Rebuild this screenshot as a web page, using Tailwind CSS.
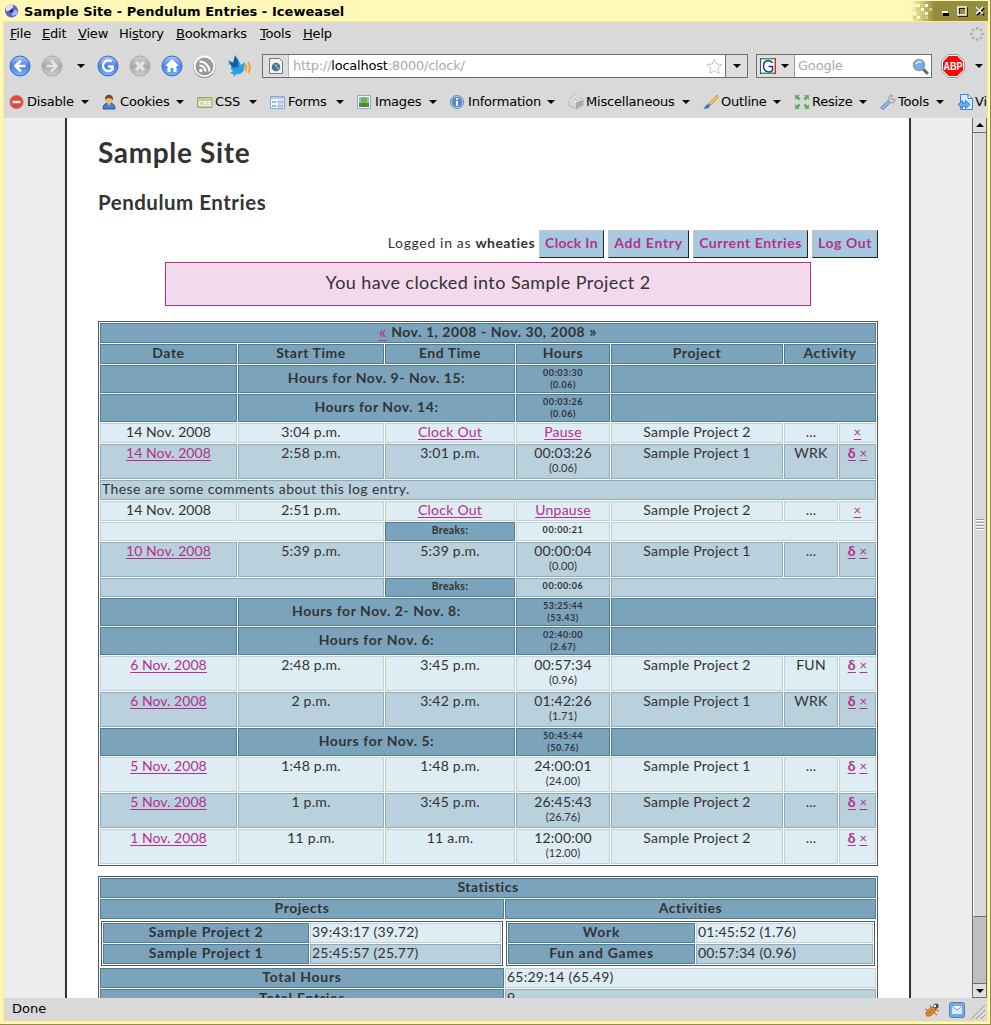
<!DOCTYPE html>
<html lang="en">
<head>
<meta charset="utf-8">
<title>Sample Site - Pendulum Entries - Iceweasel</title>
<script src="https://cdn.jsdelivr.net/npm/@tailwindcss/browser@4"></script>
</head>
<body class="w-[991px] h-[1025px] overflow-hidden bg-[#fff8b8] font-['DejaVu_Sans',sans-serif] text-[13px] text-black">
<svg class="absolute size-0">
  <defs>
    <linearGradient id="blue" x2="0" y2="1"><stop stop-color="#a9c8ff"/><stop offset=".5" stop-color="#4a80ea"/><stop offset="1" stop-color="#78b4ff"/></linearGradient>
    <linearGradient id="gray" x2="0" y2="1"><stop stop-color="#d0d0d0"/><stop offset=".5" stop-color="#a9a9a9"/><stop offset="1" stop-color="#cfcfcf"/></linearGradient>
    <symbol id="caret" viewBox="0 0 8 4"><path d="M0 0h8L4 4z"/></symbol>
  </defs>
</svg>
<div class="flex flex-col w-[991px] h-[1025px] border-r border-b border-[#968d3c] pt-px pl-[3px] pr-[2px] pb-[2px]">
  <!-- title bar -->
  <header class="flex h-5 shrink-0 items-center">
    <svg class="ml-[1px] size-4" viewBox="0 0 16 16"><circle cx="7.500" cy="8" r="6.500" fill="#5a66c8"/><path d="M2 5C4 1 8 1 9 3S6 7 4 8 2 7 2 5z" fill="#dce4ff"/><path d="M9 7c3-1 5 1 4 3s-4 4-5 2 0-4 1-5z" fill="#a8b4f4"/><path d="M5 10l3-5 2 4z" fill="#2a2d83"/></svg>
    <span class="ml-[4px] pt-px font-bold text-[13px] tracking-[0.05px] whitespace-nowrap">Sample Site - Pendulum Entries - Iceweasel</span>
    <svg class="ml-auto h-5 w-[77px]" viewBox="0 0 77 20">
      <defs><linearGradient id="tb"><stop stop-color="#fff8b8"/><stop offset=".3" stop-color="#968d3c"/></linearGradient></defs>
      <rect width="77" height="20" fill="url(#tb)"/>
      <path d="M2 3h3v3H2zM6 3h3v3H6zM2 11h3v3H2zM10 7h3v3h-3zM6 15h3v3H6zM14 3h3v3h-3zM14 11h3v3h-3z" fill="#fffbd8"/><path d="M6 7h3v3H6zM10 11h3v3h-3zM18 7h3v3h-3zM2 15h3v3H2zM14 15h3v3h-3zM10 3h3v3h-3z" fill="#d9cf75"/>
      <path d="M32 12h6v3h-6z"/><path d="M31 10h6v2h-6z" fill="#fff"/>
      <path d="M48 7h8v8h-8z" fill="none" stroke="#000" stroke-width="1.500"/><path d="M47 6h8v8h-8z" fill="none" stroke="#fff" stroke-width="1.500"/>
      <path d="M66 7l7 7m0-7l-7 7" stroke="#000" stroke-width="2"/><path d="M65 6l7 7m0-7l-7 7" stroke="#fff" stroke-width="1.600"/>
    </svg>
  </header>
  <div class="flex h-[1001px] flex-col border border-[#ffec80] bg-[#d9d9d9] overflow-hidden">
    <!-- menu bar -->
    <nav class="flex h-6 shrink-0 items-center pl-[6px] text-[13px] tracking-[-0.2px]">
      <span class="w-8"><u>F</u>ile</span><span class="w-9"><u>E</u>dit</span><span class="w-[41px]"><u>V</u>iew</span><span class="w-[57px]">Hi<u>s</u>tory</span><span class="w-[84px]"><u>B</u>ookmarks</span><span class="w-[43px]"><u>T</u>ools</span><span><u>H</u>elp</span>
      <svg class="ml-auto mr-[3px] size-[14px]" viewBox="0 0 14 14" fill="#aaa"><circle cx="7" cy="1.500" r="1.300"/><circle cx="11" cy="3" r="1.300"/><circle cx="12.500" cy="7" r="1.300"/><circle cx="11" cy="11" r="1.300"/><circle cx="7" cy="12.500" r="1.300"/><circle cx="3" cy="11" r="1.300"/><circle cx="1.500" cy="7" r="1.300"/><circle cx="3" cy="3" r="1.300"/></svg>
    </nav>
    <!-- navigation bar -->
    <div class="flex h-10 shrink-0 items-center pl-[5px]">
      <svg class="size-[22px]" viewBox="0 0 22 22"><circle cx="11" cy="11" r="10" fill="url(#blue)" stroke="#3767c5"/><path d="M12 5.500L6.500 11l5.500 5.500M7 11h9.500" fill="none" stroke="#fff" stroke-width="2.600"/></svg>
      <svg class="ml-[10px] size-[22px]" viewBox="0 0 22 22"><circle cx="11" cy="11" r="10" fill="url(#gray)" stroke="#aaa"/><path d="M10 5.500l5.500 5.500-5.500 5.500M15 11H5.500" fill="none" stroke="#e4e4e4" stroke-width="2.600"/></svg>
      <svg class="ml-[14px] h-1 w-2"><use href="#caret"/></svg>
      <svg class="ml-[12px] size-[22px]" viewBox="0 0 22 22"><circle cx="11" cy="11" r="10" fill="url(#blue)" stroke="#3767c5"/><path d="M14.500 6.500A5.300 5.300 0 1 0 15.500 14v-2.500H11" fill="none" stroke="#fff" stroke-width="2.500"/></svg>
      <svg class="ml-[10px] size-[22px]" viewBox="0 0 22 22"><circle cx="11" cy="11" r="10" fill="url(#gray)" stroke="#aaa"/><path d="M7 7l8 8m0-8l-8 8" stroke="#e4e4e4" stroke-width="3.200"/></svg>
      <svg class="ml-[10px] size-[22px]" viewBox="0 0 22 22"><circle cx="11" cy="11" r="10" fill="url(#blue)" stroke="#3767c5"/><path d="M11 4l7 7h-2.500v6h-3v-4h-3v4h-3v-6H4z" fill="#fff"/></svg>
      <svg class="ml-[10px] size-[23px]" viewBox="0 0 23 23"><circle cx="11.500" cy="12" r="11" fill="#888"/><circle cx="11.500" cy="11.200" r="10.700" fill="#fff"/><circle cx="11.500" cy="11.500" r="9" fill="#9a9a9a"/><circle cx="8" cy="15.500" r="1.700" fill="#fff"/><path d="M6.500 10.500a6 6 0 0 1 6 6M6.500 6.500a10 10 0 0 1 10 10" fill="none" stroke="#fff" stroke-width="2"/></svg>
      <svg class="ml-[10px] h-[22px] w-[26px]" viewBox="0 0 26 22"><path d="M8 7l2-5 2 2 3 6 4-3-1 7c-1 4-4 6-8 5l-2 3-1-3-3-1 3-2c-3-2-2-4-1-6L1 9z" fill="#2a9fe4"/><path d="M9 0l3 6v7L7 8zM2 5l7 4 1 4-4-1z" fill="#125f9f"/><path d="M19 9c1.500 2 1.500 5 0 7M22 7c2.500 3 2.500 8 0 11" fill="none" stroke="#ff9d21" stroke-width="1.900"/></svg>
      <div class="ml-[10px] flex h-6 w-[486px] items-stretch border border-[#6d6d6d] bg-white">
        <div class="flex w-[26px] items-center justify-center border-r border-[#b5b5b5] bg-[#dedede]">
          <svg class="h-4 w-[14px]" viewBox="0 0 14 16"><path d="M.5.5h10l3 3v12H.500z" fill="#f4f4f0" stroke="#777"/><circle cx="7" cy="9" r="4.300" fill="#416eb2"/><path d="M5 6l4 1-2 3zM8 9l3 1-3 2z" fill="#93be48"/></svg>
        </div>
        <div class="flex flex-1 items-center pl-[4px] text-[13px] tracking-[-0.22px] text-[#aaa]"><span>http://<span class="text-black">localhost</span>:8000/clock/</span></div>
        <svg class="my-auto mr-[2px] size-[17px]" viewBox="0 0 17 17"><path d="M8.500 1l2.200 5 5.300.5-4 3.600 1.200 5.400-4.700-2.800-4.700 2.800L5 10.100 1 6.500 6.300 6z" fill="#fff" stroke="#c4c4c4"/></svg>
        <div class="flex w-[22px] items-center justify-center border-l border-[#6d6d6d] bg-[#dedede]"><svg class="h-1 w-2"><use href="#caret"/></svg></div>
      </div>
      <div class="ml-2 flex h-6 w-[176px] items-stretch border border-[#6d6d6d] bg-white">
        <div class="flex w-[38px] items-center border-r border-[#999] bg-[#dedede] pl-[3px]">
          <svg class="size-4" viewBox="0 0 16 16"><rect width="16" height="16" fill="#fff"/><path d="M0 .7h16M0 15.300h16" stroke="#35a935" stroke-width="1.400"/><path d="M.5 0v16" stroke="#2345c0"/><path d="M15.300 0v16" stroke="#d22" stroke-width="1.400"/><path d="M12.500 5C11 1.800 3.500 1.500 3.500 8s7 7 9 4.500V8.500H8.500" fill="none" stroke="#14329b" stroke-width="1.500"/></svg>
          <svg class="ml-[5px] h-1 w-2"><use href="#caret"/></svg>
        </div>
        <div class="flex flex-1 items-center pl-[3px] tracking-[-0.2px] text-[#aaa]">Google</div>
        <svg class="my-auto mr-[2px] size-[17px]" viewBox="0 0 17 17"><path d="M10 10l5 5" stroke="#666" stroke-width="3" stroke-linecap="round"/><circle cx="7" cy="7" r="5.500" fill="#75b1e8" stroke="#8c9cab" stroke-width="1.500"/><path d="M4 6a3.500 3.500 0 0 1 5-2" stroke="#e4f3ff" stroke-width="1.500" fill="none"/></svg>
      </div>
      <svg class="ml-[9px] size-6" viewBox="0 0 24 24"><path d="M7.200.500h9.600l6.700 6.700v9.600l-6.700 6.700H7.200L.5 16.800V7.200z" fill="#fff" stroke="#999"/><path d="M7.700 2h8.600L22 7.700v8.600L16.300 22H7.700L2 16.300V7.700z" fill="#f30b0b"/><text x="12" y="16" text-anchor="middle" textLength="19" lengthAdjust="spacingAndGlyphs" font-family="Liberation Sans" font-weight="bold" font-size="11.500" fill="#fff">ABP</text></svg>
      <svg class="ml-[10px] h-1 w-2"><use href="#caret"/></svg>
    </div>
    <!-- developer toolbar -->
    <div id="dev" class="flex h-8 w-[983px] shrink-0 items-center overflow-hidden pl-[5px] text-[13px] tracking-[-0.2px] whitespace-nowrap"></div>

    <!-- page viewport -->
    <div class="flex h-[880px] shrink-0 overflow-hidden bg-[#ededed]">
      <main class="ml-[61px] h-[900px] w-[846px] border-x-2 border-[#333] bg-white pl-[31px] font-[Lato,sans-serif] text-[#333]">
        <h1 class="pt-[16px] text-[28px] leading-[36px] font-bold tracking-[0.65px]">Sample Site</h1>
        <h2 class="mt-[19px] text-[20.5px] leading-[26px] font-bold tracking-[0.5px]">Pendulum Entries</h2>
        <div class="mt-[15px] flex h-7 w-[780px] items-stretch justify-end gap-1 text-[14px] leading-[24px] text-center text-[#333]">
          <span class="pt-px tracking-[0.65px]">Logged in as <b class="tracking-[0.45px]">wheaties</b></span>
          <a class="w-[65px] border border-t-[#c4c4c4] border-l-[#c4c4c4] border-r-[#222] border-b-[#222] bg-[#a6c9df] font-bold tracking-[0.3px] text-[#b52f8f]">Clock In</a>
          <a class="w-[81px] border border-t-[#c4c4c4] border-l-[#c4c4c4] border-r-[#222] border-b-[#222] bg-[#a6c9df] font-bold tracking-[0.7px] text-[#b52f8f]">Add Entry</a>
          <a class="w-[115px] border border-t-[#c4c4c4] border-l-[#c4c4c4] border-r-[#222] border-b-[#222] bg-[#a6c9df] font-bold tracking-[0.55px] text-[#b52f8f]">Current Entries</a>
          <a class="w-[66px] border border-t-[#c4c4c4] border-l-[#c4c4c4] border-r-[#222] border-b-[#222] bg-[#a6c9df] font-bold tracking-[0.55px] text-[#b52f8f]">Log Out</a>
        </div>
        <p class="mt-1 ml-[67px] flex h-11 w-[646px] items-center justify-center border border-[#b52f8f] bg-[#f3d9ec] pb-1 text-[18px] tracking-[0.43px]">You have clocked into Sample Project 2</p>
        <section id="entries" class="mt-[15px] grid w-[780px] grid-cols-[137px_146px_130px_94px_172px_54px_37px] gap-px border border-[#555] p-px text-center text-[14px] leading-[16px] tracking-[0.25px]"></section>
        <section class="mt-[10px] grid w-[780px] grid-cols-[404px_371px] gap-px border border-[#555] p-px text-[14px] leading-[16px] tracking-[0.25px]">
          <div class="col-span-2 h-5 border border-[#4c7d97] bg-[#7ba3bc] text-center font-bold tracking-[0.5px]">Statistics</div>
          <div class="h-5 border border-[#4c7d97] bg-[#7ba3bc] text-center font-bold tracking-[0.5px]">Projects</div>
          <div class="h-5 border border-[#4c7d97] bg-[#7ba3bc] text-center font-bold tracking-[0.5px]">Activities</div>
          <div class="h-[47px] p-px">
            <div class="grid w-[402px] grid-cols-[206px_191px] gap-px border border-[#555] p-px">
              <div class="h-5 border border-[#4c7d97] bg-[#7ba3bc] text-center font-bold tracking-[0.6px]">Sample Project 2</div><div class="border border-[#c2cfd6] bg-[#deecf4] pl-px">39:43:17 (39.72)</div>
              <div class="h-5 border border-[#4c7d97] bg-[#7ba3bc] text-center font-bold tracking-[0.6px]">Sample Project 1</div><div class="border border-[#8fabb9] bg-[#b9d0dd] pl-px">25:45:57 (25.77)</div>
            </div>
          </div>
          <div class="h-[47px] p-px">
            <div class="grid w-[369px] grid-cols-[187px_177px] gap-px border border-[#555] p-px">
              <div class="h-5 border border-[#4c7d97] bg-[#7ba3bc] text-center font-bold tracking-[0.7px]">Work</div><div class="border border-[#c2cfd6] bg-[#deecf4] pl-px">01:45:52 (1.76)</div>
              <div class="h-5 border border-[#4c7d97] bg-[#7ba3bc] text-center font-bold tracking-[0.7px]">Fun and Games</div><div class="border border-[#8fabb9] bg-[#b9d0dd] pl-px">00:57:34 (0.96)</div>
            </div>
          </div>
          <div class="h-5 border border-[#4c7d97] bg-[#7ba3bc] text-center font-bold tracking-[0.7px]">Total Hours</div><div class="border border-[#c2cfd6] bg-[#deecf4] pl-px">65:29:14 (65.49)</div>
          <div class="h-5 border border-[#4c7d97] bg-[#7ba3bc] text-center font-bold tracking-[0.7px]">Total Entries</div><div class="border border-[#8fabb9] bg-[#b9d0dd] pl-px">9</div>
        </section>
      </main>
      <!-- scrollbar -->
      <div class="ml-auto flex w-[15px] flex-col border-x border-[#6d6d6d] bg-[#bfbfbf]">
        <div class="flex h-[15px] items-center justify-center border-b border-[#6d6d6d] bg-[#dedede]"><svg class="h-1 w-2 rotate-180"><use href="#caret"/></svg></div>
        <div class="flex h-[784px] flex-col items-center justify-center gap-px border-b border-b-[#6d6d6d] border-l border-l-white bg-[#d9d9d9]">
          <i class="block h-[2px] w-2 border-t border-b border-t-[#999] border-b-white"></i><i class="block h-[2px] w-2 border-t border-b border-t-[#999] border-b-white"></i><i class="block h-[2px] w-2 border-t border-b border-t-[#999] border-b-white"></i><i class="block h-[2px] w-2 border-t border-b border-t-[#999] border-b-white"></i>
        </div>
        <div class="mt-auto flex h-[15px] items-center justify-center border-y border-[#6d6d6d] bg-[#dedede]"><svg class="h-1 w-2"><use href="#caret"/></svg></div>
      </div>
    </div>
    <!-- status bar -->
    <footer class="flex h-[23px] shrink-0 items-center pl-2">
      <span class="pb-[2px]">Done</span>
      <svg class="ml-auto size-4" viewBox="0 0 16 16"><path d="M1 7l4 2M3 14l3-3M6 3l2 4M13 13l-4-3M15 9l-5-2M1 11h4" stroke="#93603a"/><ellipse cx="7" cy="9.500" rx="6" ry="3" transform="rotate(-45 7 9.500)" fill="#e88830" stroke="#a4561b" stroke-width=".8"/><circle cx="12" cy="4" r="2.600" fill="#444"/><circle cx="11" cy="4" r="1.200" fill="#fff"/><path d="M4 12l5-5" stroke="#a4561b"/></svg>
      <svg class="ml-[9px] size-4" viewBox="0 0 16 16"><rect x=".5" y=".5" width="15" height="15" rx="2" fill="#78aae0" stroke="#4a80c0"/><path d="M3 4h10v8H3z" fill="#d7e8fa"/><path d="M3 4l5 4 5-4" fill="#fff" stroke="#6a98d0"/></svg>
      <svg class="ml-[6px] mr-[2px] mt-1 size-[14px]" viewBox="0 0 14 14" stroke="#999"><path d="M0 14L14 0M5 14l9-9M10 14l4-4"/></svg>
    </footer>
  </div>
</div>
<script>
// Developer toolbar: width, label, icon
const tools = [
  [93,'Disable','<circle cx="7.500" cy="8" r="6.700" fill="#e2453b" stroke="#c98880"/><path d="M3.500 8h8" stroke="#fff" stroke-width="2.400"/>'],
  [95,'Cookies','<path d="M1 15c0-5 3-6 6-6s6 1 6 6z" fill="#4a80cc" stroke="#2a58a4"/><circle cx="7" cy="5.500" r="3.700" fill="#f0b480"/><path d="M3 6c-1-7 9-7 8 0-2-2-5-3-8 0z" fill="#794317"/><path d="M5.500 9l1.500 3 1.500-3z" fill="#f4c89c"/>'],
  [73,'CSS','<path d="M.5 3.500h14.500v10H.500z" fill="#c8c998" stroke="#a4a678"/><text x="7.800" y="11.500" text-anchor="middle" font-size="6.500" font-weight="bold" letter-spacing="-.3" font-family="Liberation Sans" fill="#fff">CSS</text>'],
  [87,'Forms','<path d="M.5 2.500h14v12H.500z" fill="#f4f8ff" stroke="#8ca4c8"/><path d="M1 3h13v2H1z" fill="#b2c8e8"/><path d="M2 8h4M2 12h4" stroke="#3970c8"/><path d="M8 7h5v2H8zM8 11h5v2H8z" fill="#dce8f8" stroke="#5888c8" stroke-width=".6"/>'],
  [93,'Images','<path d="M.5 1.500h13v13H.500z" fill="#f4f8ff" stroke="#8aa9c8"/><path d="M2 3h10v6H2z" fill="#8dbbe8"/><path d="M2 9h10v4H2z" fill="#4e9038"/><circle cx="7" cy="6.500" r="3.200" fill="#71ba40"/><path d="M7 9v3" stroke="#825420" stroke-width="1.500"/>'],
  [118,'Information','<circle cx="7" cy="8" r="6.500" fill="#5588c8" stroke="#7090b8"/><circle cx="7" cy="8" r="5.600" fill="none" stroke="#bdd5ef" stroke-width=".8"/><path d="M7 4v1.800M7 7v5" stroke="#fff" stroke-width="2"/>'],
  [135,'Miscellaneous','<path d="M0 5l7-3 8 3v6l-7 4-8-4z" fill="#d5d5d5" stroke="#a6a6a6" stroke-width=".7"/><path d="M8 8v7l7-4V5z" fill="#aaa"/><path d="M0 5l8 3 7-3" fill="none" stroke="#eee"/><ellipse cx="5" cy="4.500" rx="2.300" ry="1.400" fill="#eee" stroke="#aaa" stroke-width=".6"/><ellipse cx="10" cy="4.500" rx="2.300" ry="1.400" fill="#eee" stroke="#aaa" stroke-width=".6"/><ellipse cx="7.500" cy="2.500" rx="2.300" ry="1.300" fill="#f4f4f4" stroke="#aaa" stroke-width=".6"/>'],
  [91,'Outline','<path d="M14 1l1.500 2L8 11 6 9z" fill="#f2c45b" stroke="#b88a2c" stroke-width=".7"/><path d="M6 9l2 2-2 1-1-1z" fill="#999"/><path d="M5 10l2 2c-1 3-4 3-7 2.500C3 13 2 11 5 10z" fill="#3e76be"/>'],
  [86,'Resize','<path d="M1 1h5L4.500 2.500l2 2-2 2-2-2L1 6zM15 1v5l-1.500-1.500-2 2-2-2 2-2L10 1zM1 15v-5l1.500 1.500 2-2 2 2-2 2L6 15zM15 15h-5l1.500-1.500-2-2 2-2 2 2L15 10z" fill="#5da75c" stroke="#a9d3a4" stroke-width=".5"/>'],
  [77,'Tools','<path d="M1.500 12.500L9 6l2 2-7 7c-2 1.500-4-1-2.500-2.500z" fill="#8cb2ea" stroke="#5379bc" stroke-width=".8"/><path d="M8.500 6.500C7.500 3 10 .8 12.500 1.500L11 4l1 1.500 3-.5c.5 3-2 5-4.500 3.500z" fill="#d0d0d0" stroke="#888" stroke-width=".8"/>'],
  [60,'View','<path d="M3.500.500h8l4 4v11h-12z" fill="#d8eafc" stroke="#3f84d2"/><path d="M11 .5v4h4" fill="#fff" stroke="#3f84d2"/><path d="M5.500 6.500L1 10.500l4.500 4v-2.500h3v2.500l4.500-4-4.500-4v2.500h-3z" fill="#6fb0ec" stroke="#2f7bd0"/>']
];
document.getElementById('dev').innerHTML = tools.map(([w,label,icon]) =>
  `<div class="flex shrink-0 items-center" style="width:${w}px"><svg class="size-4 shrink-0" viewBox="0 0 16 16">${icon}</svg><span class="ml-[2px]">${label}</span><svg class="ml-auto mr-[13px] h-1 w-2 shrink-0"><use href="#caret"/></svg></div>`).join('');

const H = 'border border-[#4c7d97] bg-[#7ba3bc] font-bold tracking-[0.55px] ';
const S = 'border border-[#4c7d97] bg-[#7ba3bc] font-bold ';
const L = 'border border-[#c2cfd6] bg-[#deecf4] ';
const D = 'border border-[#8fabb9] bg-[#b9d0dd] ';
const cell = (cls, html = '') => `<div class="${cls}">${html}</div>`;
const link = t => `<a class="text-[#b52f8f] underline underline-offset-2">${t}</a>`;
const date = t => `<span class="tracking-[0.05px]">${t}</span>`;
const del = '<a class="text-[13px] leading-none text-[#b52f8f] underline underline-offset-2">×</a>';
const edit = '<a class="font-[\'DejaVu_Serif\'] text-[14px] leading-none font-bold text-[#b52f8f] underline underline-offset-2">δ</a>';
const sum = (label, h, d) => cell(H + 'h-7') + cell(H + 'col-span-2 h-7 leading-[24px]', label) +
  cell(S + 'h-7 pt-[1px] text-[9px] leading-[12px] tracking-[0.5px]', `${h}<br>(${d})`) + cell(H + 'col-span-3 h-7');
const open = (day, start, action) => cell(L + 'h-5', date(day)) + cell(L + 'h-5', start) + cell(L + 'h-5', link('Clock Out')) +
  cell(L + 'h-5', link(action)) + cell(L + 'h-5', 'Sample Project 2') + cell(L + 'h-5', '...') + cell(L + 'h-5', del);
const entry = (c, day, start, end, h, d, p, act) => cell(c + 'h-[35px]', link(date(day))) + cell(c, start) + cell(c, end) +
  cell(c, `${h}<div class="text-[11px] leading-[14px] tracking-[0.1px]">(${d})</div>`) + cell(c, 'Sample Project ' + p) + cell(c, act) + cell(c + 'whitespace-nowrap', edit + ' ' + del);
const breaks = (c, t) => cell(c + 'col-span-2 h-[19px]') + cell(S + 'text-[10.5px] leading-[15px] tracking-[0.3px]', 'Breaks:') +
  cell(c + 'font-bold text-[9px] leading-[14px] tracking-[0.6px]', t) + cell(c + 'col-span-3');

document.getElementById('entries').innerHTML =
  cell(H + 'col-span-7 flex h-5 items-center justify-center gap-1 pb-[2px]', '<a class="text-[18px] leading-[14px] -mt-[3px] font-normal text-[#b52f8f] underline underline-offset-2">«</a><span>Nov. 1, 2008 - Nov. 30, 2008</span><span class="text-[16px] leading-[14px] -mt-[2px]">»</span>') +
  ['Date','Start Time','End Time','Hours','Project'].map(t => cell(H + 'h-5', t)).join('') + cell(H + 'col-span-2', 'Activity') +
  sum('Hours for Nov. 9- Nov. 15:', '00:03:30', '0.06') +
  sum('Hours for Nov. 14:', '00:03:26', '0.06') +
  open('14 Nov. 2008', '3:04 p.m.', 'Pause') +
  entry(D, '14 Nov. 2008', '2:58 p.m.', '3:01 p.m.', '00:03:26', '0.06', 1, 'WRK') +
  cell(D + 'col-span-7 h-5 pl-px text-left tracking-[0.41px]', 'These are some comments about this log entry.') +
  open('14 Nov. 2008', '2:51 p.m.', 'Unpause') +
  breaks(L, '00:00:21') +
  entry(D, '10 Nov. 2008', '5:39 p.m.', '5:39 p.m.', '00:00:04', '0.00', 1, '...') +
  breaks(D, '00:00:06') +
  sum('Hours for Nov. 2- Nov. 8:', '53:25:44', '53.43') +
  sum('Hours for Nov. 6:', '02:40:00', '2.67') +
  entry(L, '6 Nov. 2008', '2:48 p.m.', '3:45 p.m.', '00:57:34', '0.96', 2, 'FUN') +
  entry(D, '6 Nov. 2008', '2 p.m.', '3:42 p.m.', '01:42:26', '1.71', 1, 'WRK') +
  sum('Hours for Nov. 5:', '50:45:44', '50.76') +
  entry(L, '5 Nov. 2008', '1:48 p.m.', '1:48 p.m.', '24:00:01', '24.00', 1, '...') +
  entry(D, '5 Nov. 2008', '1 p.m.', '3:45 p.m.', '26:45:43', '26.76', 2, '...') +
  entry(L, '1 Nov. 2008', '11 p.m.', '11 a.m.', '12:00:00', '12.00', 2, '...');
</script>
</body>
</html>
